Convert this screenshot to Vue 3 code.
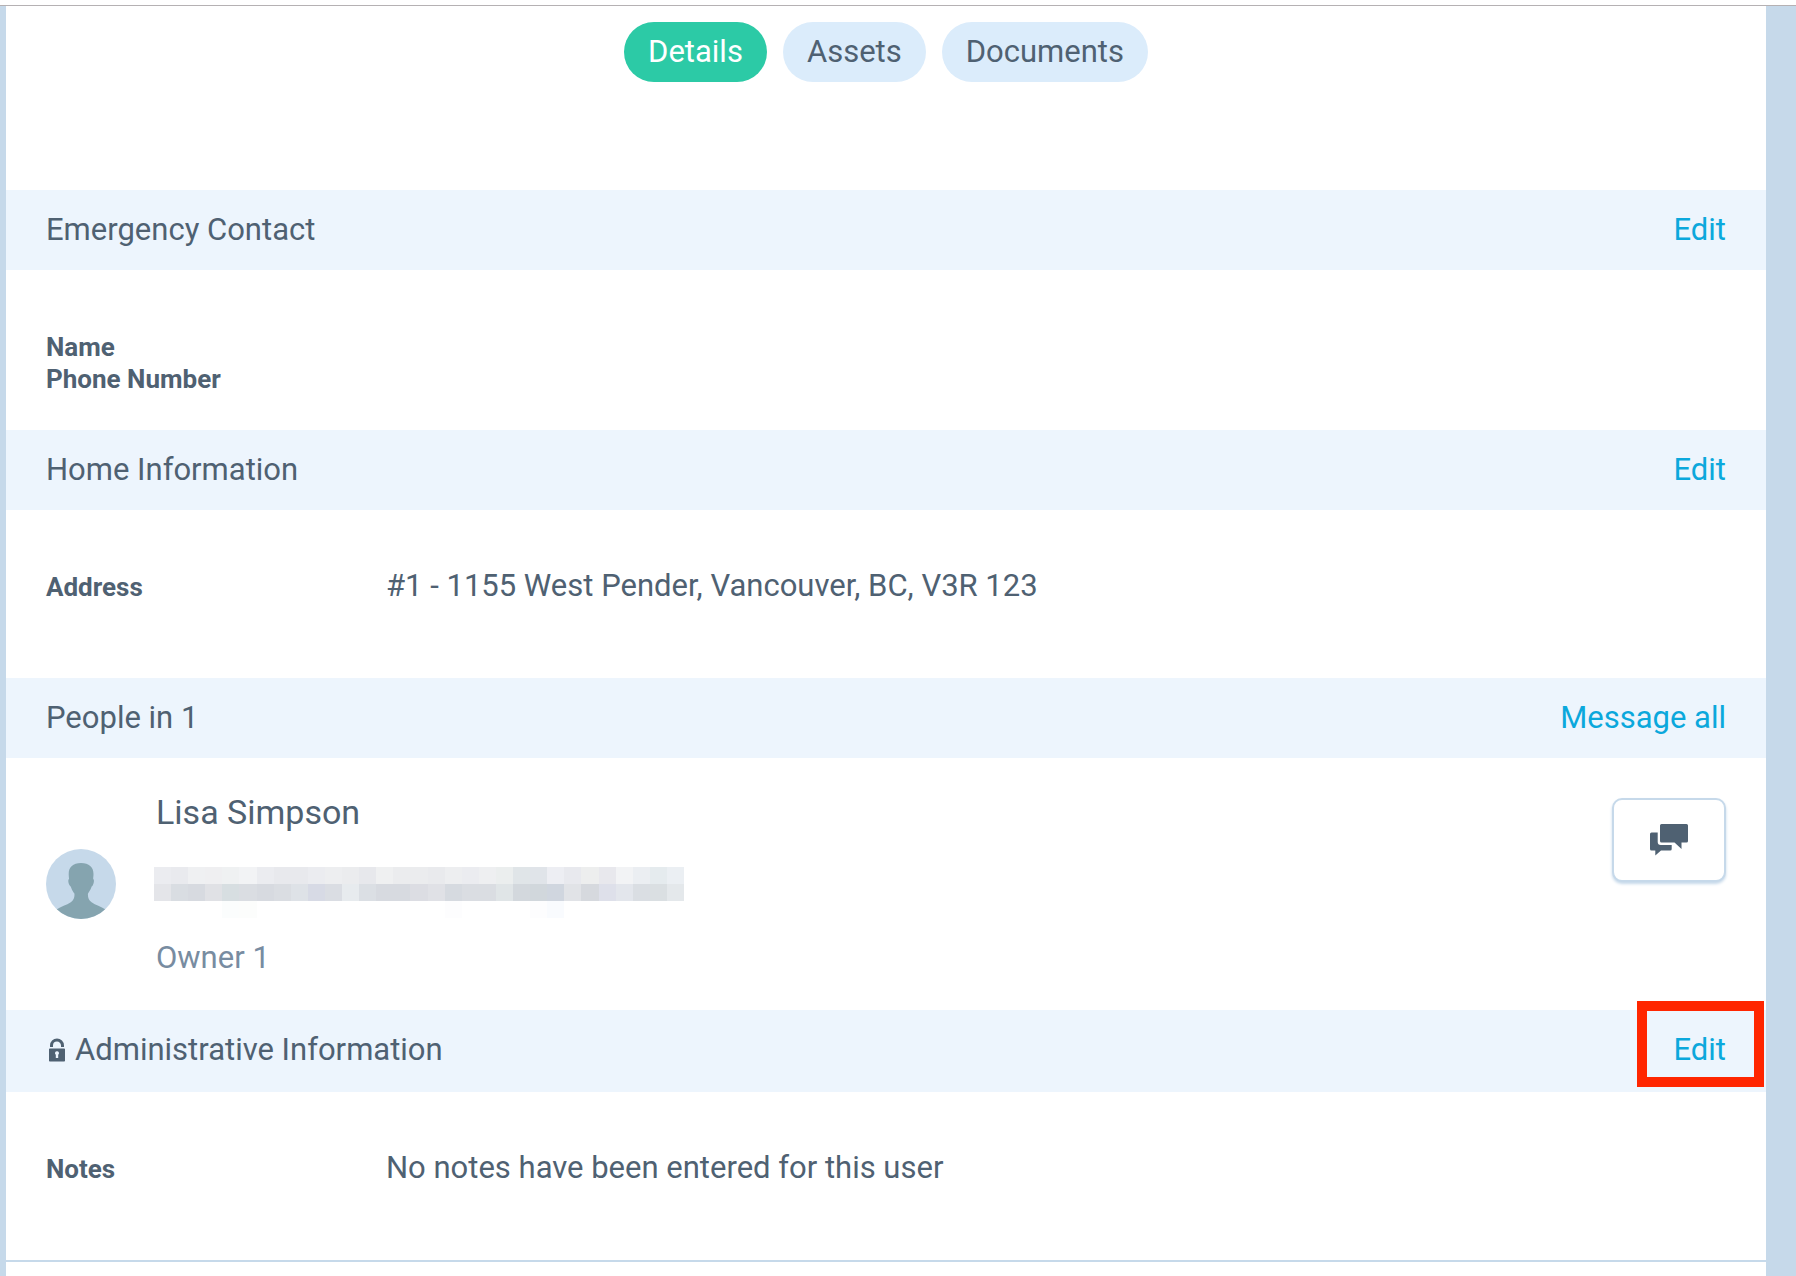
<script setup>
import { ref } from 'vue'

const tabs = ['Details', 'Assets', 'Documents']
const activeTab = ref('Details')

// Pixelated contact line: three rows of tiles
const tiles = [
  ['ebecf0', 'e9eaee', 'eff0f2', 'efeff1', 'eff1f2', 'f2f3f5', 'ebecf0', 'e8e9ed', 'e8e9ed', 'ebecf0', 'edeef0', 'ebecee', 'e7e8ec', 'eff0f1', 'ebecee', 'ebecee', 'e9eaed', 'edeef0', 'ebecf0', 'eeeff1', 'ebeeee', 'e0e5e8', 'e0e4e9', 'edeef3', 'e8e9ee', 'edeeee', 'e8e8ed', 'f2f3f5', 'ebeef2', 'e5ebee', 'ebeff3'],
  ['e4e5e9', 'd9dde2', 'd7dae0', 'e0e1e5', 'd7dee1', 'dadde2', 'd7dae0', 'dadde2', 'dee2e7', 'd7dae5', 'dadde3', 'e7ebee', 'dbdfe4', 'd7dae0', 'd7dae0', 'dcdde3', 'e0e1e6', 'd6dae0', 'dadde2', 'dadde2', 'e0e5e7', 'd3d8dd', 'd1d7dc', 'd0d6df', 'e1e3e7', 'd6d9de', 'dee0ea', 'e3e6ec', 'dadee3', 'dadfe2', 'e4e8eb'],
  ['', '', '', '', 'fbfdfd', 'fcfdfc', '', '', '', '', '', '', '', '', '', '', '', 'fdfdfe', '', '', '', '', 'fdfdfe', 'f9fbfe', '', '', '', '', '', '', ''],
]
</script>

<template>
  <div class="page">
    <main class="panel">
      <nav class="tabs" aria-label="Profile sections">
        <button
          v-for="tab in tabs"
          :key="tab"
          type="button"
          class="tab"
          :class="{ active: tab === activeTab }"
          @click="activeTab = tab"
        >{{ tab }}</button>
      </nav>

      <section>
        <header class="bar">
          <h2>Emergency Contact</h2>
          <a href="#emergency">Edit</a>
        </header>
        <dl class="contact">
          <dt>Name</dt>
          <dt>Phone Number</dt>
        </dl>
      </section>

      <section>
        <header class="bar">
          <h2>Home Information</h2>
          <a href="#home">Edit</a>
        </header>
        <dl class="field">
          <dt>Address</dt>
          <dd>#1 - 1155 West Pender, Vancouver, BC, V3R 123</dd>
        </dl>
      </section>

      <section>
        <header class="bar">
          <h2>People in 1</h2>
          <a href="#message">Message all</a>
        </header>
        <div class="person">
          <svg class="avatar" viewBox="0 0 70 70" aria-hidden="true">
            <defs>
              <clipPath id="avatar-circle"><circle cx="35" cy="35" r="35" /></clipPath>
            </defs>
            <circle cx="35" cy="35" r="35" fill="#c6d9ea" />
            <path
              clip-path="url(#avatar-circle)"
              fill="#85a4af"
              d="M35 14c8 0 12.500 4 12.500 11 0 2-.3 3.500-.3 5 1.100.6 1 3.800-.4 6.200-.6 1-1.200 1.200-1.500 2.300-.8 2.600-2.300 4.300-3.300 6-.4 3.500.5 6.500 3.600 8.700C49.500 56 55 57.500 59.500 60.500V72h-49V60.500C15 57.500 20.500 56 24.800 53.200c3.100-2.200 4-5.200 3.600-8.700-1.400-1.700-2.500-3.400-3.300-6-.3-1.100-.9-1.300-1.500-2.300-1.600-2.400-1.600-5.600-.6-6.200 0-1.500-.3-3-.3-5 0-7 4.300-11 12.300-11z"
            />
          </svg>
          <div class="details">
            <h3>Lisa Simpson</h3>
            <svg class="mosaic" viewBox="0 0 31 3" preserveAspectRatio="none" shape-rendering="crispEdges" aria-hidden="true">
              <g v-for="(row, y) in tiles" :key="y">
                <template v-for="(tile, x) in row" :key="x">
                  <rect v-if="tile" :x="x" :y="y" width="1" height="1" :fill="'#' + tile" />
                </template>
              </g>
            </svg>
            <p>Owner 1</p>
          </div>
          <button type="button" class="chat" aria-label="Message Lisa Simpson">
            <svg viewBox="0 0 38 32" aria-hidden="true">
              <path d="M11.500 0h25q1.500 0 1.500 1.500v15.500q0 1.500-1.500 1.500H31.500V25L24.500 18.500h-13q-1.500 0-1.500-1.500V1.500Q10 0 11.500 0z" />
              <path d="M1.500 8.500H7.700V18q0 3 3 3H21.700v4q0 1.500-1.500 1.500H11L5.300 31.500V26.500H1.500Q0 26.500 0 25V10Q0 8.500 1.500 8.500z" />
            </svg>
          </button>
        </div>
      </section>

      <section>
        <header class="bar admin">
          <h2>
            <svg class="lock" viewBox="0 0 18 24" aria-hidden="true">
              <path d="M3.500 9V7.500a5.500 5.500 0 0 1 11 0V9" fill="none" stroke="currentColor" stroke-width="3" />
              <path
                fill="currentColor"
                fill-rule="evenodd"
                d="M1.800 10.500h14.400q.8 0 .8.800v11.400q0 .8-.8.800H1.800q-.8 0-.8-.8V11.300q0-.8.8-.8zM9 13.200a2 2 0 0 0-1.200 3.600V20h2.400v-3.200A2 2 0 0 0 9 13.200z"
              />
            </svg>
            Administrative Information
          </h2>
          <a href="#admin">Edit</a>
          <span class="highlight"></span>
        </header>
        <dl class="field">
          <dt>Notes</dt>
          <dd>No notes have been entered for this user</dd>
        </dl>
      </section>
    </main>
  </div>
</template>

<style>
body {
  margin: 0;
}
</style>

<style scoped>
.page {
  position: relative;
  box-sizing: border-box;
  min-height: 100vh;
  display: flex;
  padding: 0 30px 0 6px;
  border-top: 6px solid #fff;
  background: #c6d9ea;
  color: #4f6172;
  font: 31px/36px Roboto, "Liberation Sans", sans-serif;
}

/* Thin rule along the top edge of the window */
.page::before {
  content: "";
  position: absolute;
  top: -1px;
  left: 0;
  right: 0;
  height: 1px;
  background: #b5b1b3;
}

.panel {
  flex: 1;
  min-width: 0;
  background: #fff;
}

.tabs {
  display: flex;
  justify-content: center;
  gap: 16px;
  padding: 16px 40px 108px;
}

.tab {
  height: 60px;
  padding: 0 24px;
  border: 0;
  border-radius: 30px;
  background: #dbecfb;
  color: inherit;
  font: inherit;
  cursor: pointer;
}

.tab.active {
  background: #2ccaa6;
  color: #fff;
}

.bar {
  display: flex;
  justify-content: space-between;
  padding: 22px 40px;
  background: #edf5fd;
}

.bar.admin {
  position: relative;
  padding-bottom: 24px;
}

h2,
h3,
p,
dl,
dd {
  margin: 0;
  font-weight: 400;
}

h2 {
  display: flex;
  align-items: center;
  gap: 9px;
  font-size: 31px;
}

a {
  color: #0ba8dc;
  text-decoration: none;
}

.highlight {
  position: absolute;
  box-sizing: border-box;
  top: -9px;
  right: 2px;
  width: 127px;
  height: 86px;
  border: 10px solid #ff2600;
  pointer-events: none;
}

dt {
  font-size: 26px;
  font-weight: 700;
}

.contact {
  padding: 61px 40px 35px;
  line-height: 32px;
}

.field {
  display: grid;
  grid-template-columns: 340px 1fr;
  align-items: baseline;
  padding: 58px 40px 73px;
}

section:last-child {
  border-bottom: 2px solid #c6d9ea;
}

.person {
  display: flex;
  align-items: center;
  padding: 34px 40px;
}

.avatar {
  width: 70px;
  height: 70px;
  margin-right: 40px;
}

.details {
  flex: 1;
}

h3 {
  font-size: 34px;
  line-height: 40px;
}

.mosaic {
  display: block;
  width: 530px;
  height: 51px;
  margin: 35px 0 22px -2px;
}

.details p {
  color: #788ca1;
}

.chat {
  display: flex;
  align-items: center;
  justify-content: center;
  align-self: flex-start;
  box-sizing: border-box;
  width: 114px;
  height: 84px;
  margin-top: 6px;
  padding: 0;
  border: 2px solid #c6d9ea;
  border-radius: 10px;
  background: #fff;
  box-shadow: 0 2px 3px #c6d9ea;
  color: inherit;
  cursor: pointer;
}

.chat svg {
  width: 38px;
  height: 32px;
  fill: currentColor;
}

.lock {
  width: 18px;
  height: 24px;
  margin-left: 2px;
}
</style>
